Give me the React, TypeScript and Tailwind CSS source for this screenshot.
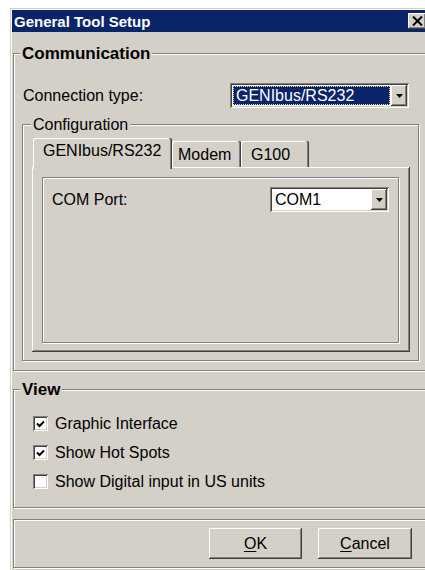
import clsx from 'clsx'
import type { ReactNode } from 'react'

// classic 3D edge styles
const etched = 'border border-[#808080] shadow-[inset_1px_1px_0_#fff,1px_1px_0_#fff]'
const raised = 'shadow-[inset_-1px_-1px_0_#404040,inset_1px_1px_0_#fff,inset_-2px_-2px_0_#808080]'
const sunken = 'shadow-[inset_1px_1px_0_#808080,inset_-1px_-1px_0_#fff,inset_2px_2px_0_#404040,inset_-2px_-2px_0_#d4d0c8]'
const tabEdge = 'shadow-[inset_-1px_0_0_#404040,inset_-2px_0_0_#808080,inset_1px_1px_0_#fff]'

function GroupBox({
  label,
  bold,
  labelLeft,
  className,
  children,
}: {
  label?: string
  bold?: boolean
  labelLeft?: string
  className?: string
  children?: ReactNode
}) {
  return (
    <div className={clsx('relative', etched, className)}>
      {label && (
        <span
          className={clsx(
            'absolute bg-[#d4d0c8] px-[2px]',
            bold ? '-top-[10px] text-[17px] font-bold leading-[19px]' : '-top-[9px] leading-[18px]',
            labelLeft
          )}
        >
          {label}
        </span>
      )}
      {children}
    </div>
  )
}

function DropArrow() {
  return (
    <div className={clsx('flex h-full w-[16px] items-center justify-center bg-[#d4d0c8]', raised)}>
      <svg width="7" height="4" viewBox="0 0 7 4">
        <path d="M0 0h7L3.5 4z" fill="#000" />
      </svg>
    </div>
  )
}

function Combo({ value, selected, className }: { value: string; selected?: boolean; className?: string }) {
  return (
    <div className={clsx('flex h-[25px] bg-white p-[2px]', sunken, className)}>
      <div className="flex flex-1 p-[1px]">
        <div
          className={clsx(
            'flex flex-1 items-center pl-[2px] leading-[18px]',
            selected ? 'border border-dotted border-[#f5db95] bg-[#0a246a] text-white' : 'text-black'
          )}
        >
          {value}
        </div>
      </div>
      <DropArrow />
    </div>
  )
}

function CheckBox({ checked, label }: { checked?: boolean; label: string }) {
  return (
    <div className="flex h-[15px] items-center">
      <div className={clsx('flex h-[15px] w-[15px] items-center justify-center bg-white', sunken)}>
        {checked && (
          <svg width="9" height="8" viewBox="0 0 9 8">
            <path d="M1 3.5 3.5 6 8 1.5" fill="none" stroke="#000" strokeWidth="2" />
          </svg>
        )}
      </div>
      <span className="ml-[7px] leading-[18px]">{label}</span>
    </div>
  )
}

function PushButton({ children, className }: { children: ReactNode; className?: string }) {
  return (
    <button className={clsx('flex h-[31px] items-center justify-center bg-[#d4d0c8] leading-[18px]', raised, className)}>
      {children}
    </button>
  )
}

export default function App() {
  return (
    <div className="h-[570px] w-[425px] overflow-hidden bg-white pl-[10px] pt-[8px] font-['Liberation_Sans',Arial,sans-serif] text-[16px] text-black">
      <div className="h-[600px] w-[420px] bg-[#d4d0c8] p-[2px] shadow-[inset_1px_1px_0_#d4d0c8,inset_2px_2px_0_#fff]">
        {/* title bar */}
        <div className="flex h-[22px] items-center justify-between bg-[#0a246a] pl-[2px] pr-[2px]">
          <span className="text-[15px] font-bold leading-[17px] text-white">General Tool Setup</span>
          <div className={clsx('flex h-[16px] w-[18px] items-center justify-center bg-[#d4d0c8]', raised)}>
            <svg width="11" height="10" viewBox="0 0 11 10">
              <path d="M1 0.5 10 9.5M10 0.5 1 9.5" stroke="#000" strokeWidth="2" />
            </svg>
          </div>
        </div>

        {/* Communication */}
        <GroupBox label="Communication" bold labelLeft="left-[6px]" className="ml-[1px] mt-[21px] h-[318px] w-[414px]">
          <div className="ml-[9px] mt-[29px] flex items-center">
            <span className="w-[207px] leading-[18px]">Connection type:</span>
            <Combo value="GENIbus/RS232" selected className="w-[179px]" />
          </div>

          <GroupBox label="Configuration" labelLeft="left-[8px]" className="ml-[8px] mt-[16px] h-[237px] w-[397px]">
            {/* tabs */}
            <div className="ml-[9px] mt-[13px] flex h-[29px] items-end">
              <div
                className={clsx(
                  'relative z-10 -mb-[2px] ml-[1px] h-[31px] w-[139px] rounded-t-[2px] bg-[#d4d0c8] pl-[10px] pt-[4px] leading-[18px]',
                  tabEdge
                )}
              >
                GENIbus/RS232
              </div>
              <div className={clsx('h-[26px] w-[69px] rounded-t-[2px] pl-[6px] pt-[5px] leading-[18px]', tabEdge)}>
                Modem
              </div>
              <div className={clsx('h-[26px] w-[68px] rounded-t-[2px] pl-[10px] pt-[5px] leading-[18px]', tabEdge)}>
                G100
              </div>
            </div>

            {/* tab page */}
            <div className={clsx('ml-[9px] h-[185px] w-[378px] bg-[#d4d0c8] pl-[10px] pt-[10px]', raised)}>
              <div className={clsx('h-[166px] w-[357px]', etched)}>
                <div className="ml-[9px] mt-[9px] flex items-center">
                  <span className="w-[218px] leading-[18px]">COM Port:</span>
                  <Combo value="COM1" className="w-[119px]" />
                </div>
              </div>
            </div>
          </GroupBox>
        </GroupBox>

        {/* View */}
        <GroupBox label="View" bold labelLeft="left-[6px]" className="ml-[1px] mt-[18px] h-[119px] w-[414px]">
          <div className="ml-[19px] mt-[26px] flex flex-col gap-[14px]">
            <CheckBox checked label="Graphic Interface" />
            <CheckBox checked label="Show Hot Spots" />
            <CheckBox label="Show Digital input in US units" />
          </div>
        </GroupBox>

        {/* buttons */}
        <GroupBox className="ml-[1px] mt-[11px] h-[49px] w-[414px]">
          <div className="mt-[8px] flex justify-end gap-[16px] pr-[14px]">
            <PushButton className="w-[93px]">
              <span className="underline underline-offset-2">O</span>K
            </PushButton>
            <PushButton className="w-[94px]">
              <span className="underline underline-offset-2">C</span>ancel
            </PushButton>
          </div>
        </GroupBox>
      </div>
    </div>
  )
}
